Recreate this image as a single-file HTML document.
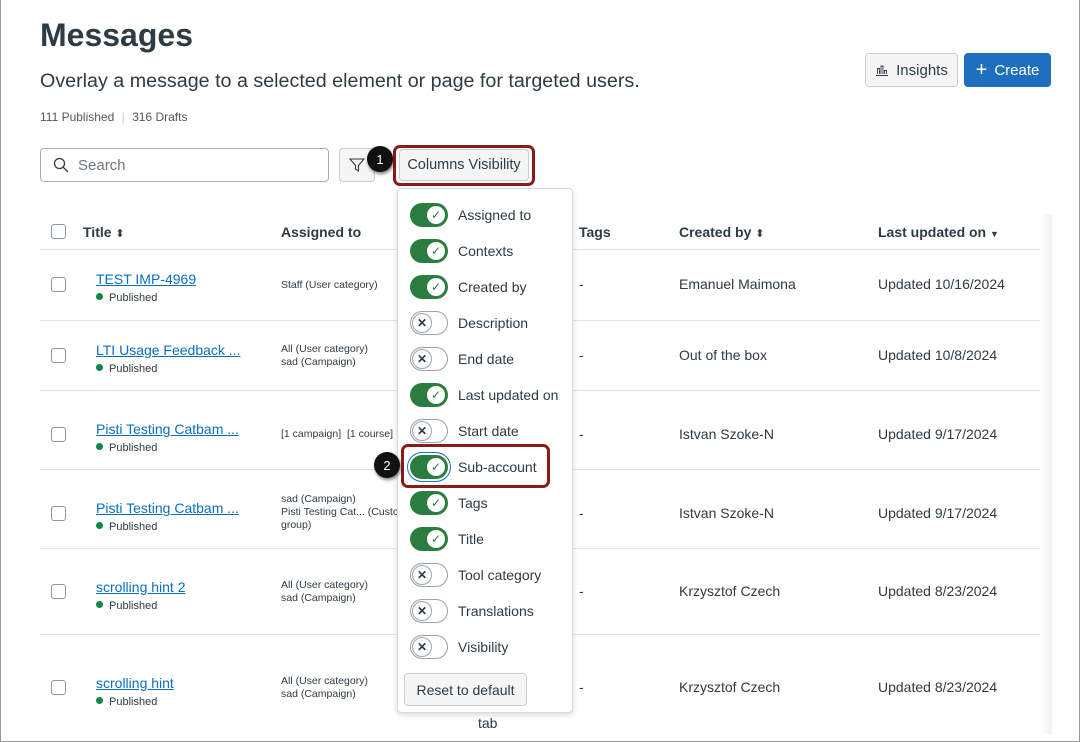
<!DOCTYPE html>
<html><head><meta charset="utf-8"><style>
*{box-sizing:border-box;margin:0;padding:0}
body{width:1080px;height:742px;overflow:hidden;background:#fff;font-family:"Liberation Sans",sans-serif;color:#2d3b45;position:relative}
.frame{position:absolute;left:0;top:0;width:1080px;height:742px;border:1px solid #9a9a9a;border-top:none}
.a{position:absolute;white-space:nowrap}
h1{position:absolute;left:40px;top:17px;font-size:32px;font-weight:bold;color:#2d3b45}
.btn{position:absolute;border:1px solid #c7cdd1;background:#f5f5f5;border-radius:4px;font-size:15px;color:#2d3b45;display:flex;align-items:center;justify-content:center}
.hdr{font-size:14px;font-weight:bold;top:224px}
.line{position:absolute;left:40px;width:1010px;height:1px;background:#e0e3e5}
.cb{position:absolute;left:51px;width:15px;height:15px;border:1px solid #8b969e;border-radius:3px;background:#fff}
.lnk{color:#0b6fbf;text-decoration:underline;font-size:14px}
.pub{font-size:11px;color:#2d3b45}
.pub:before{content:"";display:inline-block;width:7px;height:7px;border-radius:50%;background:#0b874b;margin-right:6px;vertical-align:1px}
.sm{font-size:10.5px;line-height:13px;color:#2d3b45}
.c{font-size:14px}
.menu{position:absolute;left:397px;top:188px;width:176px;height:525px;background:#fff;border:1px solid #d7dbde;border-radius:4px;box-shadow:0 2px 6px rgba(0,0,0,.15)}
.tg{position:absolute;left:12px;width:38px;height:24px;border-radius:12px}
.on{background:#2a7d3f}
.off{background:#fff;border:1px solid #9aa3a9}
.tg i{position:absolute;top:2px;width:20px;height:20px;border-radius:50%;background:#fff;font-style:normal;font-size:12px;display:flex;align-items:center;justify-content:center}
.on i{right:2px;border:1px solid #2a7d3f;color:#2a7d3f}
.off i{left:1px;top:1px;border:1px solid #9aa3a9;font-weight:bold;color:#2d3b45}
.ml{position:absolute;left:60px;font-size:14px;color:#2d3b45}
.badge{position:absolute;width:26px;height:26px;border-radius:50%;background:#111;color:#fff;font-size:13px;display:flex;align-items:center;justify-content:center;box-shadow:1px 2px 3px rgba(0,0,0,.5)}
.srt{font-size:11px;font-weight:normal}
</style></head><body>
<div class="frame"></div>
<h1>Messages</h1>
<div class="a" style="left:40px;top:70px;font-size:19.7px">Overlay a message to a selected element or page for targeted users.</div>
<div class="a" style="left:40px;top:110px;font-size:12px;color:#555">111 Published <span style="color:#ccc;margin:0 4px">|</span> 316 Drafts</div>
<div class="btn" style="left:865px;top:53px;width:93px;height:34px"><svg width="14" height="12" viewBox="0 0 14 12" style="margin-right:7px"><path d="M1 11.5h12M2.5 10V4.5h2V10M6 10V2h2v8M9.5 10V6.5h2V10" stroke="#2d3b45" fill="none" stroke-width="0.9"/></svg>Insights</div>
<div class="btn" style="left:964px;top:53px;width:87px;height:34px;background:#1f6fbf;border-color:#1f6fbf;color:#fff"><span style="font-size:20px;margin-right:7px;line-height:1">+</span>Create</div>
<div class="btn" style="left:40px;top:148px;width:289px;height:34px;justify-content:flex-start;background:#fff;border-color:#a6b0b6;padding-left:12px;color:#6b7780"><svg width="16" height="16" viewBox="0 0 16 16" style="margin-right:9px"><circle cx="6.5" cy="6.5" r="5" stroke="#2d3b45" fill="none" stroke-width="1.3"/><path d="M10.3 10.3L15 15" stroke="#2d3b45" stroke-width="1.3"/></svg>Search</div>
<div class="btn" style="left:339px;top:148px;width:36px;height:34px"><svg width="16" height="16" viewBox="0 0 16 16"><path d="M1 2h14L9.5 8.5V14L6.5 12V8.5Z" stroke="#2d3b45" fill="none" stroke-width="1.1"/></svg></div>
<div class="btn" style="left:399px;top:149px;width:130px;height:32px;font-size:14.5px">Columns Visibility</div>
<div class="a" style="left:393px;top:145px;width:142px;height:41px;border:3px solid #8b1a1a;border-radius:7px"></div>
<div class="badge" style="left:367px;top:146px">1</div>

<div class="cb" style="top:224px"></div>
<div class="a hdr" style="left:83px">Title <span class="srt">&#x2B0D;</span></div>
<div class="a hdr" style="left:281px">Assigned to</div>
<div class="a hdr" style="left:579px">Tags</div>
<div class="a hdr" style="left:679px">Created by <span class="srt">&#x2B0D;</span></div>
<div class="a hdr" style="left:878px">Last updated on <span style="font-size:9px">&#9660;</span></div>
<div class="line" style="top:249px"></div>
<div class="line" style="top:320px"></div>
<div class="line" style="top:390px"></div>
<div class="line" style="top:469px"></div>
<div class="line" style="top:548px"></div>
<div class="line" style="top:634px"></div>
<div class="a" style="left:1040px;top:214px;width:12px;height:520px;background:linear-gradient(90deg,#fff,#eef0f3)"></div>

<div class="cb" style="top:277px"></div><div class="a lnk" style="left:96px;top:271px">TEST IMP-4969</div><div class="a pub" style="left:96px;top:292px">Published</div>
<div class="a sm" style="left:281px;top:279px">Staff (User category)</div>
<div class="a c" style="left:579px;top:276px">-</div><div class="a c" style="left:679px;top:276px">Emanuel Maimona</div><div class="a c" style="left:878px;top:276px">Updated 10/16/2024</div>

<div class="cb" style="top:348px"></div><div class="a lnk" style="left:96px;top:342px">LTI Usage Feedback ...</div><div class="a pub" style="left:96px;top:363px">Published</div>
<div class="a sm" style="left:281px;top:343px">All (User category)<br>sad (Campaign)</div>
<div class="a c" style="left:579px;top:347px">-</div><div class="a c" style="left:679px;top:347px">Out of the box</div><div class="a c" style="left:878px;top:347px">Updated 10/8/2024</div>

<div class="cb" style="top:427px"></div><div class="a lnk" style="left:96px;top:421px">Pisti Testing Catbam ...</div><div class="a pub" style="left:96px;top:442px">Published</div>
<div class="a sm" style="left:281px;top:428px">[1 campaign] &nbsp;[1 course]</div>
<div class="a c" style="left:579px;top:426px">-</div><div class="a c" style="left:679px;top:426px">Istvan Szoke-N</div><div class="a c" style="left:878px;top:426px">Updated 9/17/2024</div>

<div class="cb" style="top:506px"></div><div class="a lnk" style="left:96px;top:500px">Pisti Testing Catbam ...</div><div class="a pub" style="left:96px;top:521px">Published</div>
<div class="a sm" style="left:281px;top:493px">sad (Campaign)<br>Pisti Testing Cat... (Custom<br>group)</div>
<div class="a c" style="left:579px;top:505px">-</div><div class="a c" style="left:679px;top:505px">Istvan Szoke-N</div><div class="a c" style="left:878px;top:505px">Updated 9/17/2024</div>

<div class="cb" style="top:584px"></div><div class="a lnk" style="left:96px;top:579px">scrolling hint 2</div><div class="a pub" style="left:96px;top:600px">Published</div>
<div class="a sm" style="left:281px;top:579px">All (User category)<br>sad (Campaign)</div>
<div class="a c" style="left:579px;top:583px">-</div><div class="a c" style="left:679px;top:583px">Krzysztof Czech</div><div class="a c" style="left:878px;top:583px">Updated 8/23/2024</div>

<div class="cb" style="top:680px"></div><div class="a lnk" style="left:96px;top:675px">scrolling hint</div><div class="a pub" style="left:96px;top:696px">Published</div>
<div class="a sm" style="left:281px;top:675px">All (User category)<br>sad (Campaign)</div>
<div class="a c" style="left:579px;top:679px">-</div><div class="a c" style="left:679px;top:679px">Krzysztof Czech</div><div class="a c" style="left:878px;top:679px">Updated 8/23/2024</div>
<div class="a c" style="left:478px;top:715px">tab</div>

<div class="menu">
<div class="tg on" style="top:14px"><i>✓</i></div><div class="ml" style="top:18px">Assigned to</div>
<div class="tg on" style="top:50px"><i>✓</i></div><div class="ml" style="top:54px">Contexts</div>
<div class="tg on" style="top:86px"><i>✓</i></div><div class="ml" style="top:90px">Created by</div>
<div class="tg off" style="top:122px"><i>✕</i></div><div class="ml" style="top:126px">Description</div>
<div class="tg off" style="top:158px"><i>✕</i></div><div class="ml" style="top:162px">End date</div>
<div class="tg on" style="top:194px"><i>✓</i></div><div class="ml" style="top:198px">Last updated on</div>
<div class="tg off" style="top:230px"><i>✕</i></div><div class="ml" style="top:234px">Start date</div>
<div class="tg on" style="top:266px;box-shadow:0 0 0 2px #fff,0 0 0 3px #1f6fbf"><i>✓</i></div><div class="ml" style="top:270px">Sub-account</div>
<div class="tg on" style="top:302px"><i>✓</i></div><div class="ml" style="top:306px">Tags</div>
<div class="tg on" style="top:338px"><i>✓</i></div><div class="ml" style="top:342px">Title</div>
<div class="tg off" style="top:374px"><i>✕</i></div><div class="ml" style="top:378px">Tool category</div>
<div class="tg off" style="top:410px"><i>✕</i></div><div class="ml" style="top:414px">Translations</div>
<div class="tg off" style="top:446px"><i>✕</i></div><div class="ml" style="top:450px">Visibility</div>
<div class="btn" style="left:6px;top:484px;width:123px;height:33px;font-size:14px">Reset to default</div>
</div>
<div class="a" style="left:401px;top:444px;width:149px;height:44px;border:3px solid #8b1a1a;border-radius:7px"></div>
<div class="badge" style="left:374px;top:452px">2</div>
</body></html>
